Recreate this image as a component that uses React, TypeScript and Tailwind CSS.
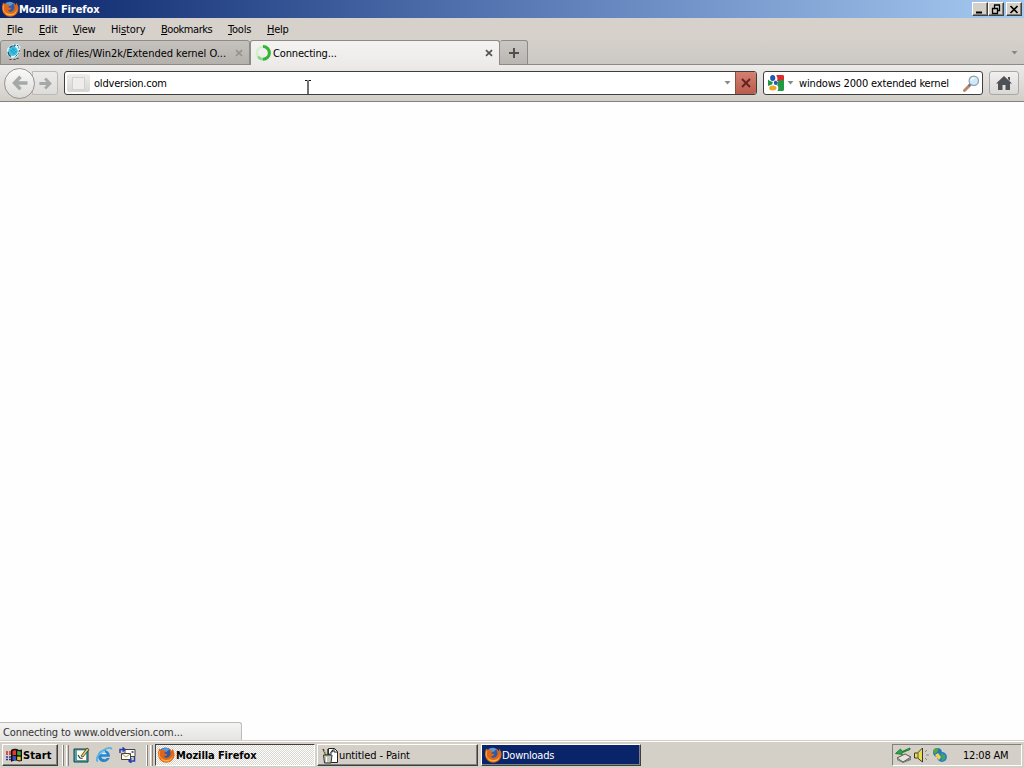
import type { ReactNode } from "react";
import clsx from "clsx";

function FirefoxIcon() {
    return (
        <svg width="17" height="16" viewBox="0 0 17 16" className="shrink-0">
            <circle cx="7.500" cy="7" r="6.600" fill="#2a5caa" />
            <path d="M3.500 3C5 .8 9 .3 11.500 2.500 10 3 9.500 4.500 8 5L5 5.500z" fill="#5c9bd6" />
            <path
                d="M1.200 1.500C0 3.800-.1 6 .2 8.500c.6 4.300 4 7.200 8 7.200 4.900 0 8.300-3.600 8.300-8.200 0-2.500-1-4.500-2.700-6.100.4 1.300.4 2 .1 2.800-.8-1.500-2-2.300-3.200-2.700 2.300 3 2.500 6.500.3 8.300-2 1.600-4.700.8-5.300-.9.900.4 2 .4 3-.7.7-.7.600-1.200 0-1.400-1 0-1.800 0-2.300-.8.200-1 1.200-1.300 1.500-2-.8-.8-1.900-.9-2.900-.5C3.500 3 2.200 2.600 1.200 1.500z"
                fill="#df6518"
            />
            <path d="M14.800 5c.9 4.700-2.100 8-6.300 8-2.700 0-4.700-1-6-3.200.3 3.300 3 4.800 6 4.800 4.900 0 7.300-4.600 6.300-9.600z" fill="#f8b13c" />
            <path d="M1.800 4C1 6.500 1.100 9 2.300 11" fill="none" stroke="#f7a541" strokeWidth="1.100" />
        </svg>
    );
}

function GlobeIcon() {
    return (
        <svg width="16" height="17" viewBox="0 0 16 17" className="shrink-0">
            <path d="M4 1.500L7.500 0H12l2.500 3-1 6-3 4L6 14l-4.500-3L1 5z" fill="#dff5fa" />
            <circle cx="7" cy="7.300" r="4.700" fill="#3cc5e5" />
            <path d="M4.500 7.500l4-3.500M5 9.500l5-5M7 10.500l4-4M4 5.500l5 5M6 4l4.500 4.500" stroke="#1689b2" strokeWidth=".6" />
            <path d="M3.500 3.500L6 2h3M2 8l1 3 2 1.500" fill="none" stroke="#14506e" strokeWidth="1.200" />
            <path d="M8 1l4 .5 1 3M13.500 6l-1 3.500-3 3" fill="none" stroke="#205878" strokeDasharray="2 1" />
            <path d="M3.500 15.500h2m2 0h2m1-1h2" stroke="#444" />
        </svg>
    );
}

function Throbber() {
    return (
        <svg width="16" height="16" viewBox="0 0 16 16" className="shrink-0">
            <circle cx="8" cy="8" r="6.200" fill="none" stroke="#d3efd0" strokeWidth="2.500" />
            <path d="M8 1.500a6.400 6.400 0 0 1 0 12.800" fill="none" stroke="#35b334" strokeWidth="3" />
            <path d="M8 14.200a6.200 6.200 0 0 1-5-2.700" fill="none" stroke="#8bd786" strokeWidth="2.500" />
        </svg>
    );
}

function CloseX({ color }: { color: string }) {
    return (
        <svg width="8" height="8" viewBox="0 0 8 8" className="shrink-0">
            <path d="M1 1.200l6 5.600M7 1.200L1 6.800" stroke={color} strokeWidth="1.700" />
        </svg>
    );
}

function ChevronTri({ color = "#888" }: { color?: string }) {
    return (
        <svg width="7" height="4" viewBox="0 0 7 4" className="shrink-0">
            <path d="M.5 0h6L3.500 3.500z" fill={color} />
        </svg>
    );
}

function GoogleIcon() {
    return (
        <svg width="16" height="16" viewBox="0 0 16 16" className="shrink-0">
            <path d="M8.500 0H15l1 1v5H9C9.800 4 9.500 2 8.500 1z" fill="#dc2b2b" />
            <path d="M10 5.500L16 5v10l-1 1H9.500c1.300-2.500 1-4.200-.2-5.500z" fill="#229a43" />
            <path d="M0 4.500l2 1.500 3 1-1 2.500L0 11z" fill="#229a43" />
            <ellipse cx="4.700" cy="3" rx="2.600" ry="2.900" fill="#2458b5" />
            <path d="M6 6.500l2-1 2 2-1.500 2.700-2.500-1z" fill="#2458b5" />
            <ellipse cx="4.800" cy="13" rx="3.700" ry="2.500" fill="#f0a52c" />
        </svg>
    );
}

function SearchIcon() {
    return (
        <svg width="17" height="17" viewBox="0 0 17 17" className="shrink-0">
            <path d="M7 10l-5.500 5.500" stroke="#b98670" strokeWidth="3" strokeLinecap="round" />
            <path d="M7.500 9l-2 2" stroke="#777" strokeWidth="2" />
            <circle cx="10.800" cy="5.800" r="4.700" fill="#cbeafb" stroke="#8c9daa" strokeWidth="1.200" />
            <path d="M8 5.500C8.500 3.500 10 3 11.500 3" fill="none" stroke="#fff" strokeWidth="1.300" />
        </svg>
    );
}

function Arrow({ flip, size }: { flip?: boolean; size: number }) {
    return (
        <svg width={size} height={size} viewBox="0 0 16 16" className={clsx("shrink-0", flip && "-scale-x-100")}>
            <path d="M8.500 1.800L2.500 8l6 6.200M3 8h12.500" fill="none" stroke="#a4a9a8" strokeWidth="3.400" />
        </svg>
    );
}

function WindowsFlag() {
    return (
        <svg width="17" height="15" viewBox="0 0 17 15" className="shrink-0">
            <path d="M5 2c3-2 6-1 8 0l3-.5v11.500l-3 .5c-3-1.500-5-1-8 .5z" fill="#111" />
            <path d="M6.500 3c1.500-.8 2.500-.8 3.500-.5V7c-1.500-.3-2.500 0-3.500.4z" fill="#e33b27" />
            <path d="M11.200 3l3.500.5v4l-3.500-.4z" fill="#3fa83b" />
            <path d="M6.500 8.500c1-.5 2.500-.6 3.500-.3v4c-1.500-.3-2.500 0-3.500.4z" fill="#3151c5" />
            <path d="M11.200 8.400l3.500.4v3.700l-3.500-.4z" fill="#e8c72c" />
            <path d="M0 4h2m1 0h2M0 6h2m1 0h2" stroke="#c92b32" strokeWidth="1.300" />
            <path d="M0 9h2m1 0h2M0 11.500h2m1 0h2" stroke="#2b3790" strokeWidth="1.300" />
        </svg>
    );
}

function ShowDesktopIcon() {
    return (
        <svg width="17" height="16" viewBox="0 0 17 16">
            <path d="M1 2h14v13H1z" fill="#52a5ab" stroke="#173b45" />
            <path d="M4 3.500h9v9.500H4z" fill="#fffde9" />
            <path d="M5 8l2 3 2.500.5" fill="none" stroke="#303333" strokeWidth="1.200" />
            <path d="M8 9l6-8 2 1.500-6 7.500z" fill="#e2cd5c" stroke="#333" strokeWidth=".8" />
        </svg>
    );
}

function ExplorerIcon() {
    return (
        <svg width="17" height="16" viewBox="0 0 17 16">
            <path d="M14 9.800H5.200c.3 3 4.600 3 5.500 1.200h3C11 17 2.500 16 2 9.200 2 1.200 14 .5 14 9.800z" fill="#2586cd" />
            <path d="M5.300 7.300c.5-2.600 4.700-2.600 5.300 0z" fill="#d7edf6" />
            <path d="M2 14.500C-1 13 2 7 7 3.500 11 .8 15.500-.2 15.500 2.500" fill="none" stroke="#55b2e2" strokeWidth="1.800" />
            <path d="M4 7.500c.7-2.300 3-3.300 5-3" fill="none" stroke="#8ed3f2" />
        </svg>
    );
}

function OutlookIcon() {
    return (
        <svg width="17" height="16" viewBox="0 0 17 16">
            <path d="M6 2.500h10v7H6z" fill="#fffdf0" stroke="#444" />
            <path d="M12.500 4h2v2h-2z" fill="#4b62c2" />
            <path d="M2.500 6.500h9v6h-9z" fill="#fffdf0" stroke="#444" />
            <path d="M3 7l4 3 4-3" fill="none" stroke="#a99b63" />
            <path d="M1 6V2.500h4M3.500.5L6 2.500l-2.500 2M15.500 10v4h-5M12.500 11.500L10 14l2.500 2" fill="none" stroke="#293bb0" strokeWidth="1.500" />
        </svg>
    );
}

function PaintIcon() {
    return (
        <svg width="16" height="17" viewBox="0 0 16 17" className="shrink-0">
            <path d="M6.500 1.500h6l3 3v11h-9z" fill="#fff" stroke="#222" />
            <path d="M12 1.500V5h3.500" fill="none" stroke="#222" />
            <path d="M1.500 8h8.500l-1 8H2.500z" fill="#c4c7b6" stroke="#333" />
            <path d="M4.500 10v5" stroke="#fff" />
            <path d="M4 8L1 2M6 8V2M7.500 8L11 3" stroke="#333" strokeWidth="1.500" />
            <path d="M4 7L2 3.500" stroke="#e5bd2e" />
            <path d="M8 7l2-2" stroke="#429ab0" />
        </svg>
    );
}

function TrayIcons() {
    return (
        <svg width="54" height="18" viewBox="0 0 54 18" className="shrink-0">
            <path d="M3 12l8-4 6 3-8 5z" fill="#e5e5da" stroke="#555" />
            <path d="M3 13l6 3 8-4v2l-8 3-6-3z" fill="#777" />
            <path d="M16 2L8 5.500 6.500 3 1.500 7.500l7 1-1-1.500L16 3.500z" fill="#28aa45" stroke="#126b26" strokeWidth=".8" />
            <path d="M20.500 7h3l5-5v14l-5-4h-3z" fill="#e8dc53" stroke="#3d3d25" />
            <path d="M24 7v5" stroke="#555" />
            <path d="M31 6l2-2m-1 5h3m-4 3l2 2" stroke="#888" />
            <circle cx="43.500" cy="6.500" r="4.500" fill="#2477b7" />
            <path d="M40 3c3-2 5-1 4 2l-3 3-2-2z" fill="#53a743" />
            <circle cx="48" cy="11" r="4.900" fill="#297ec4" />
            <path d="M41 9l3-2 3 4-2 3z" fill="#f4d347" />
            <path d="M47 7l4 2v4l-3 2z" fill="#43a45e" />
        </svg>
    );
}

function CaptionButton({ children }: { children: ReactNode }) {
    return (
        <div className="flex h-[14px] w-4 items-center justify-center border border-t-white border-l-white border-r-[#404040] border-b-[#404040] bg-[#d4d0c8] shadow-[inset_-1px_-1px_0_#808080]">
            <svg width="12" height="11" viewBox="0 0 12 11">
                {children}
            </svg>
        </div>
    );
}

const menus = [
    { pre: "", key: "F", rest: "ile", width: "w-8", spacing: "tracking-[-0.1px]" },
    { pre: "", key: "E", rest: "dit", width: "w-[34px]", spacing: "tracking-[-0.2px]" },
    { pre: "", key: "V", rest: "iew", width: "w-[38px]", spacing: "tracking-[-0.3px]" },
    { pre: "Hi", key: "s", rest: "tory", width: "w-[50px]", spacing: "tracking-[-0.1px]" },
    { pre: "", key: "B", rest: "ookmarks", width: "w-[67px]", spacing: "tracking-[-0.45px]" },
    { pre: "", key: "T", rest: "ools", width: "w-[39px]", spacing: "tracking-[-0.2px]" },
    { pre: "", key: "H", rest: "elp", width: "w-10", spacing: "tracking-[-0.3px]" },
];

function TitleBar() {
    return (
        <div className="flex h-[18px] items-center bg-linear-to-r from-[#0a246a] via-[#5878b4] to-[#a6caf0] pr-[2px] pl-[2px] text-white">
            <FirefoxIcon />
            <span className="font-bold tracking-[-0.1px]">Mozilla Firefox</span>
            <div className="ml-auto flex">
                <CaptionButton>
                    <path d="M2 8.500h6" stroke="#000" strokeWidth="2" />
                </CaptionButton>
                <CaptionButton>
                    <path d="M4 1h6M4.500 1v3M9.500 1v5.500H8M2 4.500h6M2.500 4v5.500h5V4" fill="none" stroke="#000" strokeWidth="1.300" />
                </CaptionButton>
                <div className="w-[2px]" />
                <CaptionButton>
                    <path d="M2.500 2l7 7M9.500 2l-7 7" stroke="#000" strokeWidth="1.700" />
                </CaptionButton>
            </div>
        </div>
    );
}

function MenuBar() {
    return (
        <div className="flex h-[22px] items-center bg-[#d6d1ca] pl-[7px]">
            {menus.map((m) => (
                <span key={m.key + m.rest} className={clsx("shrink-0", m.width, m.spacing)}>
                    {m.pre}
                    <span className="underline underline-offset-1">{m.key}</span>
                    {m.rest}
                </span>
            ))}
        </div>
    );
}

function TabStrip() {
    return (
        <div className="flex h-[25px] bg-linear-to-b from-[#d5d0c9] to-[#cbc8c4] shadow-[inset_0_-1px_0_#8d8b88]">
            <div className="flex w-[250px] items-center rounded-t-[3px] border border-[#8d8b88] bg-linear-to-b from-[#c6c3be] to-[#b4b1ad] pl-[5px]">
                <GlobeIcon />
                <span className="ml-[1px] w-[212px] tracking-[-0.03px]">Index of /files/Win2k/Extended kernel O...</span>
                <CloseX color="#96938f" />
            </div>
            <div className="flex w-[250px] items-center rounded-t-[3px] border border-b-0 border-[#8d8b88] bg-linear-to-b from-[#f4f3f2] to-[#ecebe9] pl-1">
                <Throbber />
                <span className="ml-[2px] w-[212px] tracking-[-0.15px]">Connecting...</span>
                <CloseX color="#55534f" />
            </div>
            <div className="flex w-7 items-center justify-center rounded-t-[3px] border border-l-0 border-[#8d8b88] bg-linear-to-b from-[#cbc8c3] to-[#b9b6b2]">
                <svg width="12" height="12" viewBox="0 0 12 12">
                    <path d="M6 1v10M1 6h10" stroke="#51504d" strokeWidth="2" />
                </svg>
            </div>
            <div className="ml-auto flex items-center pr-[6px]">
                <ChevronTri />
            </div>
        </div>
    );
}

function NavBar() {
    return (
        <div className="flex h-[37px] items-center border-b border-[#858380] bg-linear-to-b from-[#edebe9] to-[#d1ceca] pr-[5px] pl-1">
            <div className="z-10 flex size-[31px] shrink-0 items-center justify-center rounded-full border border-[#96938f] bg-linear-to-b from-[#fafafa] to-[#dddbd8]">
                <Arrow size={16} />
            </div>
            <div className="-ml-[3px] flex h-[24px] w-[26px] shrink-0 items-center justify-center rounded-r-[3px] border border-[#bcb9b5] bg-linear-to-b from-[#ecebea] to-[#dedcda]">
                <Arrow size={13} flip />
            </div>
            <div className="relative ml-[6px] flex h-6 w-[693px] items-center overflow-hidden rounded-[3px] border border-[#3f3e3c] bg-white">
                <div className="ml-[2px] flex h-[18px] w-[23px] items-center justify-center rounded-[2px] bg-linear-to-b from-[#eeedeb] to-[#d8d6d3]">
                    <div className="size-[13px] border border-[#d3d1ce] bg-[#eeedeb]" />
                </div>
                <span className="ml-1 tracking-[-0.2px]">oldversion.com</span>
                <svg width="8" height="16" viewBox="0 0 8 16" className="absolute top-[8px] left-[239px]">
                    <path d="M1 .5h2.500m1 0H7M4 1v14M1 15.500h2.500m1 0H7" stroke="#111" strokeWidth="1.200" />
                </svg>
                <div className="ml-auto flex h-full items-center">
                    <ChevronTri />
                    <div className="ml-1 flex h-full w-[21px] items-center justify-center border-l border-[#8c4c42] bg-linear-to-b from-[#d57f70] to-[#b95c4e]">
                        <svg width="12" height="12" viewBox="0 0 12 12">
                            <path d="M2 2l8 8M10 2l-8 8" stroke="#63251c" strokeWidth="2" />
                        </svg>
                    </div>
                </div>
            </div>
            <div className="ml-[6px] flex h-6 w-[220px] items-center rounded-[3px] border border-[#3f3e3c] bg-white pr-[2px] pl-1">
                <GoogleIcon />
                <div className="ml-[3px]">
                    <ChevronTri />
                </div>
                <span className="ml-[5px] tracking-[-0.16px]">windows 2000 extended kernel</span>
                <div className="ml-auto">
                    <SearchIcon />
                </div>
            </div>
            <div className="ml-auto flex h-6 w-[30px] items-center justify-center rounded-[3px] border border-[#aaa7a3] bg-linear-to-b from-[#f1f0ef] to-[#dad8d5]">
                <svg width="16" height="14" viewBox="0 0 16 14">
                    <path d="M8 0l8 7.500h-2V14H9.500V9h-3v5H2V7.500H0z" fill="#4d5054" />
                    <path d="M12 1h2v4l-2-2z" fill="#4d5054" />
                </svg>
            </div>
        </div>
    );
}

function TaskSeparator() {
    return (
        <div className="flex h-[21px] shrink-0 gap-[2px]">
            <div className="w-[2px] border-r border-l border-r-[#858178] border-l-white" />
            <div className="w-[3px] border-r border-l border-r-[#858178] border-l-white bg-[#d4d0c8]" />
        </div>
    );
}

function TaskBar() {
    const raised = "border border-t-white border-l-white border-r-[#404040] border-b-[#404040] shadow-[inset_-1px_-1px_0_#808080]";
    return (
        <div className="flex h-7 items-center border-t border-[#d4d0c8] bg-[#d4d0c8] pt-[1px] pl-[2px] shadow-[inset_0_1px_0_#fff]">
            <div className={clsx("flex h-[22px] w-14 items-center bg-[#d4d0c8] pl-[3px]", raised)}>
                <WindowsFlag />
                <span className="font-bold tracking-[0.1px]">Start</span>
            </div>
            <div className="ml-1">
                <TaskSeparator />
            </div>
            <div className="ml-[3px] flex w-[74px] gap-[6px] pl-[1px]">
                <ShowDesktopIcon />
                <ExplorerIcon />
                <OutlookIcon />
            </div>
            <TaskSeparator />
            <div className="ml-[2px] flex h-[22px] w-[160px] items-center border border-t-[#404040] border-l-[#404040] border-r-white border-b-white bg-[repeating-conic-gradient(#fff_0_25%,#d9d6d0_0_50%)] bg-size-[2px_2px] pl-[2px]">
                <FirefoxIcon />
                <span className="ml-px font-bold tracking-[-0.1px]">Mozilla Firefox</span>
            </div>
            <div className={clsx("ml-[2px] flex h-[22px] w-[161px] items-center bg-[#d4d0c8] pl-[4px]", raised)}>
                <PaintIcon />
                <span className="ml-px tracking-[-0.1px]">untitled - Paint</span>
            </div>
            <div className={clsx("ml-[3px] flex h-[22px] w-[160px] items-center bg-[#0a246a] pl-[3px] text-white", raised)}>
                <FirefoxIcon />
                <span className="tracking-[-0.25px]">Downloads</span>
            </div>
            <div className="mr-[2px] ml-auto flex h-[22px] w-[130px] items-center border border-t-[#808080] border-l-[#808080] border-r-white border-b-white pl-[1px]">
                <TrayIcons />
                <span className="ml-[15px] tracking-[-0.2px]">12:08 AM</span>
            </div>
        </div>
    );
}

export default function App() {
    return (
        <div className="flex h-[768px] w-[1024px] flex-col overflow-hidden bg-white font-['DejaVu_Sans_Condensed','DejaVu_Sans',sans-serif] text-[11px] leading-[14px] font-stretch-condensed whitespace-nowrap text-black select-none [&_span]:pt-[2px]">
            <TitleBar />
            <MenuBar />
            <TabStrip />
            <NavBar />
            <div className="flex flex-1 items-end bg-[#fefefe]">
                <div className="flex h-[18px] w-[242px] items-center rounded-tr-[3px] border-t border-r border-[#bdbbb8] bg-linear-to-b from-[#f4f4f3] to-[#e5e4e2] pl-[3px] text-[#333]">
                    <span className="tracking-[-0.12px]">Connecting to www.oldversion.com...</span>
                </div>
            </div>
            <TaskBar />
        </div>
    );
}
